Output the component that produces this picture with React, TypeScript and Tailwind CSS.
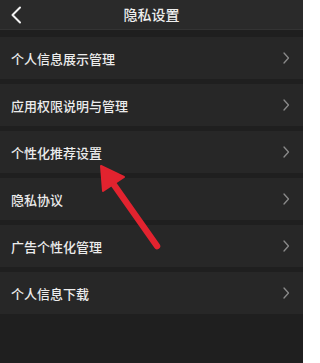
const items = [
  "个人信息展示管理",
  "应用权限说明与管理",
  "个性化推荐设置",
  "隐私协议",
  "广告个性化管理",
  "个人信息下载",
];

const font = { fontFamily: '"Noto Sans CJK SC", "Noto Sans", sans-serif' };

const Chevron = ({ left }: { left?: boolean }) => (
  <svg
    width={left ? 12 : 8}
    height={left ? 18 : 12}
    viewBox={left ? "0 0 12 18" : "0 0 8 12"}
    fill="none"
  >
    {left ? (
      <path d="M10 1.5 L2.5 9 L10 16.5" stroke="#f2f2f2" strokeWidth="2" strokeLinecap="round" strokeLinejoin="round" />
    ) : (
      <path d="M2 1 L6.5 6 L2 11" stroke="#8a8a8a" strokeWidth="1.3" strokeLinecap="round" strokeLinejoin="round" />
    )}
  </svg>
);

export default function App() {
  return (
    <div className="relative w-[303px] h-[363px] overflow-hidden bg-[#1f1f1f]" style={font}>
      <div className="flex items-center h-[29px] bg-[#2a2a2a] relative">
        <div className="pl-[10px] pt-[1px] flex items-center">
          <Chevron left />
        </div>
        <div className="absolute inset-0 flex items-center justify-center text-[14px] font-medium text-[#eeeeee]">
          隐私设置
        </div>
      </div>
      <div className="h-[1px] bg-[#333333]" />
      <div className="flex flex-col gap-[5px] pt-[7px]">
        {items.map((label) => (
          <div
            key={label}
            className="flex items-center justify-between h-[42px] pl-[11px] pr-[13px] bg-[#272727]"
          >
            <span className="text-[13px] font-medium text-[#ececec] leading-none">{label}</span>
            <Chevron />
          </div>
        ))}
      </div>
      <svg
        className="absolute top-0 left-0 pointer-events-none"
        width="303"
        height="363"
        viewBox="0 0 303 363"
      >
        <line x1="157" y1="246" x2="112" y2="182" stroke="#e2232f" strokeWidth="6.5" strokeLinecap="round" />
        <polygon points="101,166 103,191 124,177" fill="#e2232f" stroke="#e2232f" strokeWidth="2" strokeLinejoin="round" />
      </svg>
    </div>
  );
}
